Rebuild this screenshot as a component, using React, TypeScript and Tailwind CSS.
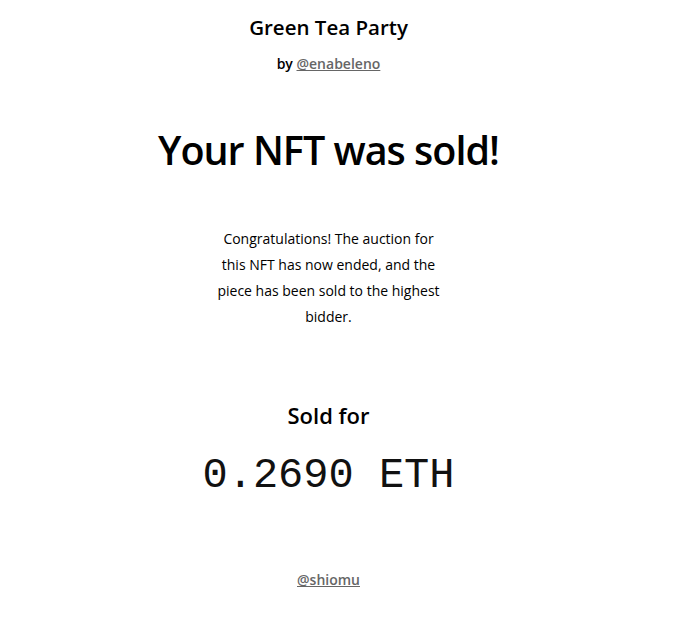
import React from 'react';

const sans = "font-['Open_Sans',sans-serif]";

export default function App() {
  return (
    <div className={`w-[657px] min-h-[624px] bg-white text-black ${sans} flex flex-col items-center`}>
      {/* Header */}
      <h1 className="mt-[12px] text-[20.5px] font-semibold leading-[30px]">Green Tea Party</h1>
      <p className="mt-[12px] text-[14px] font-semibold leading-[20px]">
        by{' '}
        <a href="#" className="text-[#666] underline">
          @enabeleno
        </a>
      </p>

      <h2 className="mt-[48px] text-[39.5px] font-semibold leading-[56px] tracking-[-1px]">Your NFT was sold!</h2>

      <p className="mt-[48px] w-[232px] text-center text-[14px] leading-[26px]">
        Congratulations! The auction for this NFT has now ended, and the piece has been sold to the highest bidder.
      </p>

      <h3 className="mt-[70px] text-[22px] font-semibold leading-[30px]">Sold for</h3>
      <div className="mt-[22px] font-['Liberation_Mono',monospace] text-[42px] leading-[48px] text-[#111]">0.2690 ETH</div>

      <a href="#" className="mt-[70px] text-[14px] font-semibold leading-[20px] text-[#666] underline">
        @shiomu
      </a>
    </div>
  );
}
